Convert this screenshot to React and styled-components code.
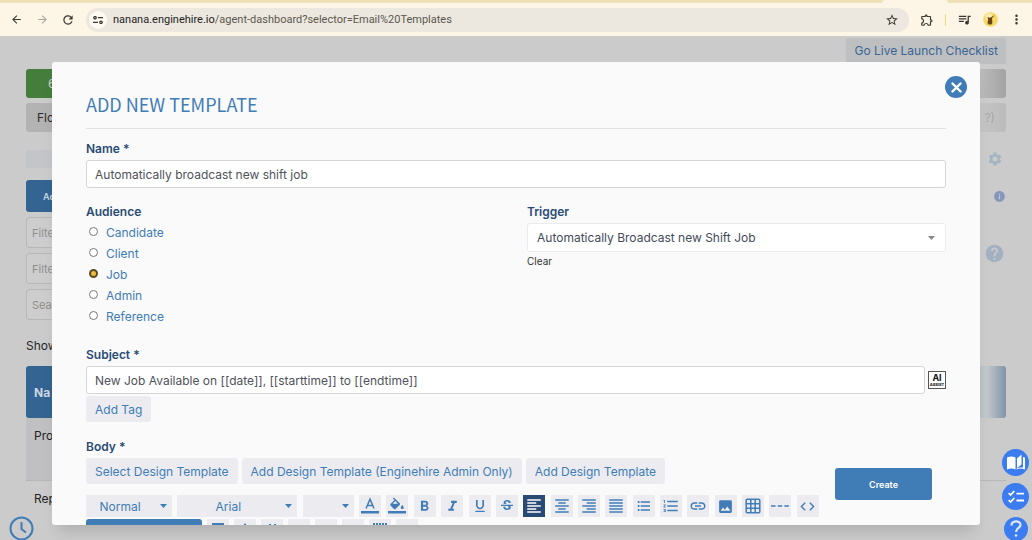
import React from 'react';
import styled, { createGlobalStyle } from 'styled-components';
import {
    MdArrowBack, MdArrowForward, MdRefresh, MdStarBorder, MdOutlineExtension, MdQueueMusic, MdMoreVert,
    MdFormatBold, MdFormatItalic, MdFormatUnderlined, MdStrikethroughS,
    MdFormatAlignLeft, MdFormatAlignCenter, MdFormatAlignRight, MdFormatAlignJustify,
    MdFormatListBulleted, MdFormatListNumbered, MdLink, MdImage, MdCode,
    MdSettings, MdInfo, MdHelp,
} from 'react-icons/md';

const blue = '#407cb5'
const navy = '#284a75'
const soft = '#ececf0'
const backdrop = '#cbcbcb'
const widget = '#3b7cf0'

const GlobalStyle = createGlobalStyle`
    * {
        box-sizing: border-box;
    }
    body {
        margin: 0;
        background: ${backdrop};
        font-family: Inter, "Liberation Sans", sans-serif;
        font-size: 12px;
    }
    button, input, select {
        font-family: inherit;
        font-size: inherit;
        margin: 0;
    }
    svg {
        display: block;
        flex-shrink: 0;
    }
`

const audiences = ['Candidate', 'Client', 'Job', 'Admin', 'Reference']

const tools = [
    { label: 'Text color', icon: <ColorIcon kind="text" /> },
    { label: 'Background color', icon: <ColorIcon kind="fill" /> },
    { label: 'Bold', icon: <MdFormatBold size={17} /> },
    { label: 'Italic', icon: <MdFormatItalic size={17} /> },
    { label: 'Underline', icon: <MdFormatUnderlined size={16} /> },
    { label: 'Strikethrough', icon: <MdStrikethroughS size={16} /> },
    { label: 'Align left', icon: <MdFormatAlignLeft size={18} />, active: true },
    { label: 'Align center', icon: <MdFormatAlignCenter size={18} /> },
    { label: 'Align right', icon: <MdFormatAlignRight size={18} /> },
    { label: 'Justify', icon: <MdFormatAlignJustify size={18} /> },
    { label: 'Bulleted list', icon: <MdFormatListBulleted size={16} /> },
    { label: 'Numbered list', icon: <MdFormatListNumbered size={18} /> },
    { label: 'Link', icon: <MdLink size={18} /> },
    { label: 'Image', icon: <MdImage size={17} /> },
    { label: 'Table', icon: <GridIcon /> },
    { label: 'Horizontal line', icon: <DashIcon /> },
    { label: 'Code', icon: <MdCode size={17} /> },
]

const moreTools = [
    'M5 4h12v3H5z',
    'M11 4l2 3h-4z',
    'M8 5h2v2H8zM13 5h2v2h-2z',
    '',
    '',
    '',
    'M4 4h2v2H4zM7 4h2v2H7zM10 4h2v2h-2zM13 4h2v2h-2zM16 4h2v2h-2z',
    '',
]

function ColorIcon({ kind }) {
    return (
        <svg width="18" height="18" viewBox="0 0 18 18" fill={blue}>
            {kind === 'text' ? (
                <path d="M5 11.500L9 2.200L13 11.500M6.300 8.600H11.700" fill="none" stroke={blue} strokeWidth="1.500" />
            ) : (
                <>
                    <path d="M5.800 0.500L4.900 1.400L6.500 3L2.500 7c-.4.400-.4 1 0 1.400l3.500 3.500c.4.400 1.100.4 1.500 0l4.300-4.200c.4-.4.4-1 0-1.400zM7.300 4L10 6.700H4.600z" fillRule="evenodd" />
                    <path d="M14.200 7.900s-1.500 1.700-1.500 2.700a1.500 1.500 0 0 0 3 0c0-1-1.500-2.700-1.500-2.700z" />
                </>
            )}
            <rect x="0" y="14" width="18" height="2.500" />
        </svg>
    )
}

function GridIcon() {
    return (
        <svg width="16" height="16" viewBox="0 0 16 16" fill="none" stroke={blue} strokeWidth="1.500">
            <rect x="1.200" y="1.200" width="13.600" height="13.600" rx="1" />
            <path d="M5.800 1v14M10.200 1v14M1 5.800h14M1 10.200h14" />
        </svg>
    )
}

function DashIcon() {
    return (
        <svg width="18" height="4" viewBox="0 0 18 4" stroke={blue} strokeWidth="1.300">
            <path d="M0 2h4.500M6.700 2h4.500M13.400 2h4.500" />
        </svg>
    )
}

function Caret({ color }) {
    return (
        <svg width="7" height="4" viewBox="0 0 7 4" fill={color}>
            <path d="M0 0h7L3.500 4z" />
        </svg>
    )
}

function Browser() {
    return (
        <BrowserBar>
            <TabStrip><TabFoot /></TabStrip>
            <BrowserRow>
                <BarButton aria-label="Back"><MdArrowBack size={13} /></BarButton>
                <BarButton aria-label="Forward" $faded><MdArrowForward size={13} /></BarButton>
                <BarButton aria-label="Reload"><MdRefresh size={14} /></BarButton>
                <AddressBar>
                    <SiteInfo>
                        <svg width="10" height="8" viewBox="0 0 10 8" fill="none" stroke="#3c3931" strokeWidth="1.300">
                            <circle cx="2" cy="1.700" r="1.200" />
                            <path d="M5 1.700h5M0 6.300h5" />
                            <circle cx="8" cy="6.300" r="1.200" />
                        </svg>
                    </SiteInfo>
                    <Address><b>nanana.enginehire.io</b>/agent-dashboard?selector=Email%20Templates</Address>
                    <MdStarBorder size={14} />
                </AddressBar>
                <BarButton aria-label="Extensions"><MdOutlineExtension size={14} /></BarButton>
                <Separator />
                <BarButton aria-label="Media"><MdQueueMusic size={15} /></BarButton>
                <BarButton aria-label="Profile">
                    <svg width="15" height="15" viewBox="0 0 15 15">
                        <circle cx="7.500" cy="7.500" r="7.300" fill="#f5d965" />
                        <circle cx="6" cy="5" r="3.500" fill="#fbeeb0" />
                        <path d="M4.500 5l2 .8L8 5.200l3.800-2.300-2.800 3.400.4 4.700-1 1.500H5.500l-1-1.500.6-3z" fill="#6d431c" />
                    </svg>
                </BarButton>
                <BarButton aria-label="Menu"><MdMoreVert size={15} /></BarButton>
            </BrowserRow>
        </BrowserBar>
    )
}

function Dashboard() {
    return (
        <DashboardPage>
            <Checklist href="#checklist">Go Live Launch Checklist</Checklist>
            <Line>
                <Tile $bg="#457e3c" $color="#c8d5c4" $indent={22}>6</Tile>
                <Tile $bg="linear-gradient(90deg, #c5c5c5 40%, #a3a3a3)" />
            </Line>
            <Line>
                <Tile $bg="#b3b3b3" $color="#2b2b2b" $indent={11}>Flo</Tile>
                <Tile $bg="linear-gradient(90deg, #cacaca 40%, #bbb)" $color="#a6a6a6" $end>?)</Tile>
            </Line>
            <SettingsLine><Band /><MdSettings size={16} color="#a5b4c3" /></SettingsLine>
            <ActionLine><AddButton>Ad</AddButton><MdInfo size={13} color="#8797bb" /></ActionLine>
            <Filters>
                <Filter aria-label="First filter" placeholder="Filte" />
                <Filter aria-label="Second filter" placeholder="Filte" />
                <Filter aria-label="Search" placeholder="Sea" />
                <HelpMark><MdHelp size={21} color="#a2b0c1" /></HelpMark>
            </Filters>
            <Showing>Show</Showing>
            <Templates>
                <thead><tr><th>Na</th></tr></thead>
                <tbody>
                    <tr><td>Pro</td></tr>
                    <tr><td>Rep</td></tr>
                </tbody>
            </Templates>
        </DashboardPage>
    )
}

function TemplateModal() {
    return (
        <Modal role="dialog" aria-labelledby="modal-title">
            <Close aria-label="Close">
                <svg width="11" height="11" viewBox="0 0 11 11" stroke="#fff" strokeWidth="2.400" strokeLinecap="round">
                    <path d="M1.500 1.500l8 8M9.500 1.500l-8 8" />
                </svg>
            </Close>
            <Title id="modal-title">ADD NEW TEMPLATE</Title>

            <Label htmlFor="name">Name *</Label>
            <TextInput id="name" defaultValue="Automatically broadcast new shift job" />

            <Columns>
                <Audience>
                    <Legend>Audience</Legend>
                    {audiences.map((a) => (
                        <Option key={a}>
                            <Radio type="radio" name="audience" value={a} defaultChecked={a === 'Job'} />
                            {a}
                        </Option>
                    ))}
                </Audience>
                <Trigger>
                    <Label htmlFor="trigger">Trigger</Label>
                    <SelectWrap>
                        <TriggerSelect id="trigger">
                            <option>Automatically Broadcast new Shift Job</option>
                        </TriggerSelect>
                        <CaretSpot $right={11}><Caret color="#888" /></CaretSpot>
                    </SelectWrap>
                    <Clear>Clear</Clear>
                </Trigger>
            </Columns>

            <Label htmlFor="subject">Subject *</Label>
            <SubjectRow>
                <TextInput id="subject" defaultValue="New Job Available on [[date]], [[starttime]] to [[endtime]]" />
                <Assist><strong>AI</strong><small>ASSIST</small></Assist>
            </SubjectRow>
            <SoftButton>Add Tag</SoftButton>

            <BodyLabel>Body *</BodyLabel>
            <ButtonRow>
                <SoftButton>Select Design Template</SoftButton>
                <SoftButton>Add Design Template (Enginehire Admin Only)</SoftButton>
                <SoftButton>Add Design Template</SoftButton>
            </ButtonRow>

            <Toolbar>
                <Picker $width={86}>
                    <PickerSelect aria-label="Format"><option>Normal</option></PickerSelect>
                    <CaretSpot $right={5}><Caret color={blue} /></CaretSpot>
                </Picker>
                <Picker $width={120}>
                    <PickerSelect aria-label="Font"><option>Arial</option></PickerSelect>
                    <CaretSpot $right={5}><Caret color={blue} /></CaretSpot>
                </Picker>
                <Picker $width={51}>
                    <PickerSelect aria-label="Size"><option></option></PickerSelect>
                    <CaretSpot $right={5}><Caret color={blue} /></CaretSpot>
                </Picker>
                {tools.map((t) => (
                    <Tool key={t.label} aria-label={t.label} $active={t.active}>{t.icon}</Tool>
                ))}
            </Toolbar>
            <MoreTools>
                <WideTool aria-label="Insert" />
                {moreTools.map((d, i) => (
                    <Tool key={i} aria-label={`Tool ${i + 1}`}>
                        <svg width="22" height="22" viewBox="0 0 22 22" fill={blue}><path d={d} /></svg>
                    </Tool>
                ))}
            </MoreTools>
            <Create>Create</Create>
        </Modal>
    )
}

const App = () => {
    return (
        <Screen>
            <GlobalStyle />
            <Browser />
            <Content>
                <Dashboard />
                <TemplateModal />
                <ClockWidget aria-label="Clock">
                    <svg width="25" height="25" viewBox="0 0 25 25" fill="none" stroke={blue} strokeWidth="2">
                        <circle cx="12.500" cy="12.500" r="11" />
                        <path d="M12.500 6v7l4.500 3.500" />
                    </svg>
                </ClockWidget>
                <Widgets>
                    <Widget aria-label="Guides">
                        <svg width="18" height="18" viewBox="0 0 18 18" fill="#fff">
                            <path d="M0 3.500C3 2 6 2 8.500 3.500V15.500C6 14 3 14 0 15.500z" />
                            <path d="M10 4.500L14.500 0.500V10.500L10 14z" />
                            <path d="M16 3l2 .5v12c-3-1.500-6-1.500-8.500 0v-1c2-1 4.500-1.200 6.500-1z" />
                        </svg>
                    </Widget>
                    <Widget aria-label="Tasks">
                        <svg width="16" height="14" viewBox="0 0 16 14" fill="none" stroke="#fff" strokeWidth="1.800">
                            <path d="M0.700 3.200L2.600 5L6.300 1M0.700 10.200L2.600 12L6.300 8M8.500 3.700H16M8.500 10.500H16" />
                        </svg>
                    </Widget>
                    <Widget aria-label="Help" $small>
                        <svg width="12" height="18" viewBox="0 0 12 18" fill="none" stroke="#dfe9fd" strokeWidth="2.200">
                            <path d="M1.500 5.500C1.500 0 10.500 0 10.500 5C10.500 8 6 8 6 12" />
                            <circle cx="6" cy="15.500" r="1.300" fill="#dfe9fd" stroke="none" />
                        </svg>
                    </Widget>
                </Widgets>
            </Content>
        </Screen>
    )
}

const Screen = styled.div`
    display: flex;
    flex-direction: column;
    height: 100vh;
    overflow: hidden;
`
const BrowserBar = styled.header`
    background: #fdf6e7;
    color: #3c3931;
`
const TabStrip = styled.div`
    height: 3px;
    padding-right: 84px;
    display: flex;
    justify-content: flex-end;
    background: #efe2ba;
`
const TabFoot = styled.div`
    width: 66px;
    border-radius: 6px 6px 0 0;
    background: #fdf6e7;
`
const BrowserRow = styled.div`
    display: flex;
    align-items: center;
    height: 33px;
    padding: 0 8px;
    gap: 10px;
`
const BarButton = styled.button`
    display: flex;
    align-items: center;
    justify-content: center;
    width: 16px;
    height: 24px;
    padding: 0;
    border: 0;
    background: none;
    color: ${(p) => (p.$faded ? '#aaa69d' : '#3c3931')};
`
const AddressBar = styled.div`
    flex: 1;
    display: flex;
    align-items: center;
    height: 24px;
    padding: 0 10px 0 3px;
    border-radius: 12px;
    background: #ece8e0;
`
const SiteInfo = styled.span`
    display: flex;
    align-items: center;
    justify-content: center;
    width: 18px;
    height: 18px;
    border-radius: 50%;
    background: #fffaf0;
`
const Address = styled.span`
    flex: 1;
    margin-left: 6px;
    font-family: Roboto, "Liberation Sans", sans-serif;
    font-size: 11px;
    color: #5b574e;
    b {
        font-weight: 400;
        color: #25231e;
    }
`
const Separator = styled.span`
    width: 1px;
    height: 12px;
    background: #f3d97c;
`
const Content = styled.main`
    position: relative;
    flex: 1;
    min-height: 0;
`
const DashboardPage = styled.div`
    display: flex;
    flex-direction: column;
    height: 100%;
    padding: 2px 26px 0;
    overflow: hidden;
`
const Checklist = styled.a`
    align-self: flex-end;
    height: 26px;
    padding: 0 8px;
    border-radius: 3px;
    background: #bebfc1;
    color: #386695;
    line-height: 26px;
    text-decoration: none;
`
const Line = styled.div`
    display: flex;
    justify-content: space-between;
    margin-top: 5px;
`
const Tile = styled.div`
    width: 60px;
    height: 29px;
    padding-left: ${(p) => p.$indent || 0}px;
    padding-right: ${(p) => (p.$end ? 11 : 0)}px;
    border-radius: 3px;
    background: ${(p) => p.$bg};
    color: ${(p) => p.$color};
    line-height: 29px;
    text-align: ${(p) => (p.$end ? 'right' : 'left')};
`
const SettingsLine = styled(Line)`
    align-items: center;
    height: 18px;
    margin: 18px 3px 0 0;
`
const Band = styled.div`
    width: 60px;
    height: 18px;
    background: #c4c5c8;
`
const ActionLine = styled(Line)`
    align-items: center;
    margin-top: 12px;
`
const AddButton = styled.button`
    width: 60px;
    height: 32px;
    padding: 0 0 0 17px;
    border: 0;
    border-radius: 3px;
    background: #336492;
    color: #c9d4df;
    font-size: 9px;
    font-weight: 600;
    text-align: left;
`
const Filters = styled.div`
    position: relative;
    display: flex;
    flex-direction: column;
    gap: 5px;
    margin-top: 5px;
`
const Filter = styled.input`
    width: 180px;
    height: 31px;
    padding: 0 5px;
    border: 1px solid #b7b7b7;
    border-radius: 3px;
    background: #cdcdcd;
    font-size: 11px;
    &::placeholder {
        color: #8d8d8d;
    }
`
const HelpMark = styled.span`
    position: absolute;
    top: 26px;
    right: 1px;
`
const Showing = styled.div`
    margin-top: 16px;
    color: #262626;
    line-height: 20px;
`
const Templates = styled.table`
    width: 100%;
    margin-top: 10px;
    border-collapse: collapse;
    th {
        height: 52px;
        padding: 0 8px;
        border-radius: 3px;
        background: linear-gradient(90deg, #336492 90%, #c4c8cc 98%, #7f95aa);
        color: #cdd7e1;
        text-align: left;
    }
    td {
        height: 62px;
        padding: 10px 8px;
        border-bottom: 1px solid #b7b7b7;
        color: #222;
        vertical-align: top;
    }
    tbody tr:first-child {
        background: linear-gradient(90deg, #c0c0c2 50%, ${backdrop});
    }
`
const Modal = styled.section`
    position: absolute;
    inset: 26px 52px 15px;
    overflow: hidden;
    padding: 0 34px;
    border-radius: 3px;
    background: #fafafa;
    box-shadow: 0 12px 14px -6px rgba(0, 0, 0, .14);
`
const Close = styled.button`
    position: absolute;
    top: 14px;
    right: 13px;
    display: flex;
    align-items: center;
    justify-content: center;
    width: 22px;
    height: 22px;
    padding: 0;
    border: 0;
    border-radius: 50%;
    background: ${blue};
`
const Title = styled.h1`
    height: 67px;
    margin: 0 0 10px;
    padding-top: 29px;
    border-bottom: 1px solid #e2e2e2;
    color: ${blue};
    font-family: "Noto Sans CJK SC", "Noto Sans", sans-serif;
    font-size: 18px;
    font-weight: 400;
    line-height: 26px;
`
const Label = styled.label`
    display: block;
    height: 21px;
    color: ${navy};
    font-weight: 600;
    line-height: 20px;
`
const BodyLabel = styled(Label).attrs({ as: 'div' })`
    margin-top: 15px;
`
const TextInput = styled.input`
    width: 100%;
    height: 28px;
    padding: 0 8px;
    border: 1px solid #d5d5d8;
    border-radius: 3px;
    background: #fff;
    color: #50525a;
`
const Columns = styled.div`
    display: grid;
    grid-template-columns: 1fr 419px;
    gap: 22px;
    height: 128px;
    margin: 14px 0 15px;
`
const Audience = styled.fieldset`
    margin: 0;
    padding: 0;
    border: 0;
`
const Legend = styled.legend`
    padding: 0;
    color: ${navy};
    font-weight: 600;
    line-height: 20px;
`
const Option = styled.label`
    display: flex;
    align-items: center;
    gap: 8px;
    height: 21px;
    padding-left: 3px;
    color: ${blue};
`
const Radio = styled.input`
    appearance: none;
    width: 9px;
    height: 9px;
    margin-bottom: 3px;
    border: 1px solid #777;
    border-radius: 50%;
    background: #fff;
    &:checked {
        border: 2px solid #5a4a22;
        background: #efbd3d;
    }
`
const Trigger = styled.div`
    min-width: 0;
`
const SelectWrap = styled.div`
    position: relative;
`
const TriggerSelect = styled.select`
    appearance: none;
    display: block;
    width: 100%;
    height: 29px;
    padding: 0 9px;
    border: 1px solid #ebebed;
    border-radius: 3px;
    background: #fff;
    color: #444a5a;
`
const CaretSpot = styled.span`
    position: absolute;
    top: 50%;
    right: ${(p) => p.$right}px;
    transform: translateY(-50%);
    pointer-events: none;
`
const Clear = styled.button`
    padding: 0;
    border: 0;
    background: none;
    color: #333;
    font-size: 10px;
    line-height: 18px;
`
const SubjectRow = styled.div`
    display: flex;
    align-items: center;
    gap: 3px;
    margin-bottom: 2px;
`
const Assist = styled.button`
    display: flex;
    flex-direction: column;
    align-items: center;
    justify-content: center;
    flex-shrink: 0;
    width: 18px;
    height: 18px;
    padding: 0;
    border: 1px solid #555;
    background: #fff;
    color: #111;
    strong {
        font-size: 9px;
        line-height: 9px;
    }
    small {
        font-size: 4px;
        font-weight: 700;
        line-height: 5px;
    }
`
const SoftButton = styled.button`
    height: 26px;
    padding: 0 9px;
    border: 0;
    border-radius: 3px;
    background: ${soft};
    color: ${blue};
    white-space: nowrap;
`
const ButtonRow = styled.div`
    display: flex;
    gap: 4px;
`
const Toolbar = styled.div`
    display: flex;
    justify-content: space-between;
    margin: 11px 127px 0 0;
`
const Picker = styled.div`
    position: relative;
    width: ${(p) => p.$width}px;
`
const PickerSelect = styled.select`
    appearance: none;
    display: block;
    width: 100%;
    height: 22px;
    padding: 0 18px 0 0;
    border: 0;
    background: ${soft};
    color: ${blue};
    text-align: center;
    text-align-last: center;
`
const Tool = styled.button`
    display: flex;
    align-items: center;
    justify-content: center;
    flex-shrink: 0;
    width: 22px;
    height: 22px;
    padding: 0;
    border: 0;
    background: ${(p) => (p.$active ? navy : soft)};
    color: ${(p) => (p.$active ? '#fff' : blue)};
`
const MoreTools = styled.div`
    display: flex;
    gap: 5px;
    margin-top: 2px;
`
const WideTool = styled.button`
    width: 116px;
    height: 26px;
    border: 0;
    border-radius: 3px;
    background: ${blue};
`
const Create = styled.button`
    position: absolute;
    right: 48px;
    bottom: 25px;
    width: 97px;
    height: 32px;
    border: 0;
    border-radius: 3px;
    background: ${blue};
    color: #fff;
    font-size: 9px;
    font-weight: 600;
`
const ClockWidget = styled.button`
    position: absolute;
    left: 9px;
    bottom: -1px;
    padding: 0;
    border: 0;
    background: none;
`
const Widgets = styled.div`
    position: absolute;
    right: 3px;
    bottom: -1px;
    display: flex;
    flex-direction: column;
    align-items: center;
    gap: 7px;
`
const Widget = styled.button`
    display: flex;
    align-items: center;
    justify-content: center;
    width: ${(p) => (p.$small ? 24 : 27)}px;
    height: ${(p) => (p.$small ? 24 : 27)}px;
    padding: 0;
    border: 0;
    border-radius: 50%;
    background: ${widget};
`

export default App;
